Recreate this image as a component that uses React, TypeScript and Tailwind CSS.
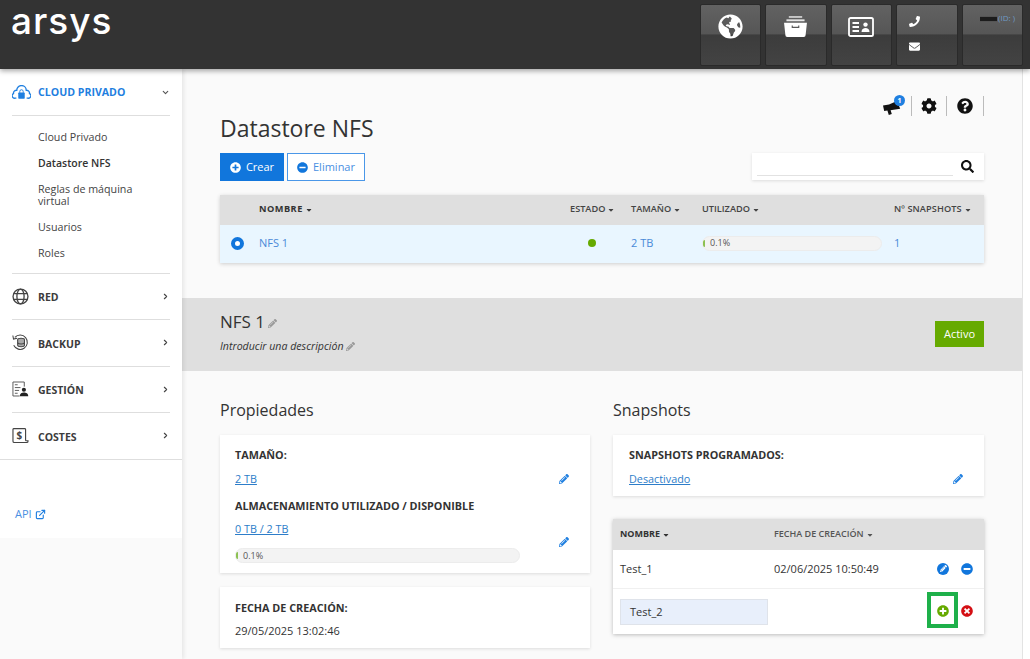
import React from "react";
import {
  FaGlobeAmericas, FaPhone, FaEnvelope, FaCog, FaQuestionCircle, FaSearch,
  FaPlusCircle, FaMinusCircle, FaTimesCircle, FaPencilAlt, FaCaretDown,
} from "react-icons/fa";
import { FiChevronDown, FiChevronRight, FiExternalLink } from "react-icons/fi";

function Caret({ className = "" }: { className?: string }) {
  return <FaCaretDown className={`inline-block w-[8px] h-[8px] ml-[2px] ${className}`} />;
}

function CloudIcon() {
  return (
    <svg viewBox="0 0 20 15" className="w-[19px] h-[15px] text-[#1f7fe0]" fill="none" stroke="currentColor" strokeWidth="1.4">
      <path d="M4.6 13.5 H3.2 A2.6 2.6 0 0 1 1.6 8.6 A3 3 0 0 1 5 5.2 A5 5 0 0 1 15 5.2 A3 3 0 0 1 18.4 8.6 A2.6 2.6 0 0 1 16.8 13.5 H15.4" />
      <rect x="6.6" y="7.6" width="6.8" height="6.4" rx="0.6" fill="currentColor" stroke="none" />
      <path d="M8.2 7.8 V6.4 A1.8 1.8 0 0 1 11.8 6.4 V7.8" strokeWidth="1" />
    </svg>
  );
}
function GlobeIcon() {
  return (
    <svg viewBox="0 0 18 18" className="w-[17px] h-[17px] text-[#444]" fill="none" stroke="currentColor" strokeWidth="1.4">
      <circle cx="9" cy="9" r="7.9" />
      <ellipse cx="9" cy="9" rx="3.8" ry="7.9" />
      <path d="M2 6 H16 M2 12 H16" />
    </svg>
  );
}
function BackupIcon() {
  return (
    <svg viewBox="0 0 18 18" className="w-[17px] h-[17px] text-[#444]" fill="none" stroke="currentColor" strokeWidth="1.1">
      <path d="M3 3.6 A7.6 7.6 0 1 1 1.8 12" />
      <path d="M0.9 1.6 L1.6 5.4 L5.4 4.6" />
      <ellipse cx="9.6" cy="6" rx="3.6" ry="1.5" fill="#aaa" />
      <path d="M6 6 V12 A3.6 1.5 0 0 0 13.2 12 V6" fill="#aaa" />
      <path d="M6 9 A3.6 1.5 0 0 0 13.2 9" />
    </svg>
  );
}
function GestionIcon() {
  return (
    <svg viewBox="0 0 18 16" className="w-[17px] h-[16px] text-[#555]" fill="none" stroke="currentColor" strokeWidth="1">
      <path d="M8 15.4 H1 V0.6 H13 V5.5" />
      <path d="M3 3.5 H6 M3 6.5 H9 M3 9.5 H7.5 M3 12.5 H6" />
      <circle cx="12.6" cy="8.8" r="2.2" fill="#222" stroke="none" />
      <path d="M8.2 15.7 C8.2 12.6 10.4 11.6 12.6 11.6 C14.8 11.6 17.2 12.6 17.2 15.7 Z" fill="#222" stroke="none" />
    </svg>
  );
}
function CostesIcon() {
  return (
    <svg viewBox="0 0 18 17" className="w-[17px] h-[16px] text-[#444]" fill="none" stroke="currentColor" strokeWidth="1.2">
      <path d="M14.4 13.5 V1.5 A1 1 0 0 0 13.4 0.6 H2 A1 1 0 0 0 1 1.5 V14 A1.4 1.4 0 0 0 2.4 15.4 H15.6 A1.4 1.4 0 0 0 17 14 V13.5 H14.4" />
      <text x="7.7" y="11.6" fontSize="10.5" fontWeight="700" textAnchor="middle" fill="currentColor" stroke="none" fontFamily="'Open Sans', sans-serif">$</text>
    </svg>
  );
}
function ArchiveIcon() {
  return (
    <svg viewBox="0 0 26 22" className="w-[25px] h-[21px] text-white" fill="currentColor">
      <rect x="6" y="0" width="14" height="2" opacity="0.65" />
      <rect x="3.5" y="3.5" width="19" height="2" opacity="0.85" />
      <path fillRule="evenodd" d="M1 7 H25 L23.6 20 A2 2 0 0 1 21.6 22 H4.4 A2 2 0 0 1 2.4 20 Z M9 10 V12.6 H17 V10 H15.8 V11.3 H10.2 V10 Z" />
    </svg>
  );
}
function IdIcon() {
  return (
    <svg viewBox="0 0 26 20" className="w-[26px] h-[20px] text-white" fill="none" stroke="currentColor">
      <rect x="1" y="1" width="24" height="18" rx="1.6" strokeWidth="1.8" />
      <path d="M4.5 6 H11 M4.5 10 H11 M4.5 14 H11" strokeWidth="1.8" />
      <circle cx="17.5" cy="7.6" r="2.2" fill="currentColor" stroke="none" />
      <path d="M13.5 15 C13.5 12 15.5 11 17.5 11 C19.5 11 21.5 12 21.5 15 Z" fill="currentColor" stroke="none" />
    </svg>
  );
}
function HornIcon() {
  return (
    <svg viewBox="0 0 18 14" className="w-[18px] h-[14px] text-[#111]" fill="currentColor">
      <path d="M0 4.4 L6 3.6 L14 0 L17.2 7.8 L9 9 L7.6 9.2 L8.8 13 L5.8 14 L4.4 9.6 L1.2 10 Z" />
    </svg>
  );
}

function HeaderButton({ children, className = "" }: { children?: React.ReactNode; className?: string }) {
  return (
    <div className={`w-[61.5px] h-[62px] rounded-[2px] border border-[#2a2a2a] bg-[linear-gradient(#626262_0%,#565656_48%,#3c3c3c_50%,#434343_100%)] ${className}`}>
      {children}
    </div>
  );
}

function NavGroup({ icon, label, h }: { icon: React.ReactNode; label: string; h: string }) {
  return (
    <div className={`${h} flex items-center mx-[12px] border-b border-[#dedede]`}>
      <span className="w-[26px] flex items-center -mt-[1px]">{icon}</span>
      <span className="text-[10.5px] font-bold text-[#3c3c3c] flex-1 mt-[3px]">{label}</span>
      <FiChevronRight className="w-[9px] h-[9px] text-[#444] -mt-[1px]" strokeWidth={3} />
    </div>
  );
}

function Progress({ w }: { w: string }) {
  return (
    <div className={`${w} h-[15px] rounded-full bg-[#f3f3f3] border border-[#ececec] relative flex items-center pl-[7px] text-[9px] text-[#555]`}>
      <span className="absolute left-0 top-[3px] w-[2px] h-[7px] bg-[#8cc152] rounded-l" />
      0.1%
    </div>
  );
}

function Pencil({ className = "" }: { className?: string }) {
  return <FaPencilAlt className={`w-[10px] h-[10px] text-[#1f7fe0] ${className}`} />;
}

export default function App() {
  return (
    <div className="w-[1030px] h-[659px] overflow-hidden bg-[#ffffff] flex flex-col text-[11px] text-[#333] font-['Open_Sans',sans-serif]">
      <header className="h-[69px] shrink-0 bg-[#333333] flex justify-between relative z-20 shadow-[0_2px_5px_rgba(0,0,0,0.35)] pl-[11px] pr-[7px] pt-[4px]">
        <div className="text-white text-[37px] leading-[40px] font-medium font-['Inter',sans-serif] tracking-[1px] -mt-[3px]">arsys</div>
        <div className="flex gap-[4px]">
          <HeaderButton className="flex justify-center pt-[9px]">
            <FaGlobeAmericas className="w-[25px] h-[25px] text-white" />
          </HeaderButton>
          <HeaderButton className="flex justify-center pt-[11px]"><ArchiveIcon /></HeaderButton>
          <HeaderButton className="flex justify-center pt-[12px]"><IdIcon /></HeaderButton>
          <HeaderButton className="flex flex-col gap-[14px] pl-[12px] pt-[11px]">
            <FaPhone className="w-[11px] h-[11px] text-white" />
            <FaEnvelope className="w-[11px] h-[11px] text-white" />
          </HeaderButton>
          <HeaderButton className="flex justify-end pt-[6px] pr-[7px] gap-[1px]">
            <span className="w-[17px] h-[6px] mt-[5px] bg-[#1c1c1c] border-y border-[#555]" />
            <span className="text-[8px] leading-[14px] text-[#6f9ac4]">(ID: )</span>
          </HeaderButton>
        </div>
      </header>

      <div className="flex flex-1 min-h-0">
        <aside className="w-[182px] shrink-0 bg-[#fafafa] shadow-[2px_0_4px_rgba(0,0,0,0.08)] relative z-10">
          <div className="bg-white h-[469px]">
            <div className="h-[47px] flex items-center mx-[12px] border-b border-[#dedede]">
              <span className="w-[26px] flex items-center"><CloudIcon /></span>
              <span className="text-[10.6px] font-bold text-[#1f7fe0] flex-1 mt-[1px]">CLOUD PRIVADO</span>
              <FiChevronDown className="w-[9px] h-[9px] text-[#555]" strokeWidth={3} />
            </div>
            <div className="mx-[12px] border-b border-[#dedede] h-[158px] pl-[26px] pt-[8px] text-[10.7px] text-[#444]">
              <div className="h-[26px] leading-[26px]">Cloud Privado</div>
              <div className="h-[26px] leading-[26px] font-semibold text-[#333] text-[10.5px]">Datastore NFS</div>
              <div className="h-[38px] leading-[12px] pt-[7px]">Reglas de máquina<br />virtual</div>
              <div className="h-[26px] leading-[26px]">Usuarios</div>
              <div className="h-[26px] leading-[26px]">Roles</div>
            </div>
            <NavGroup h="h-[46px]" icon={<GlobeIcon />} label="RED" />
            <NavGroup h="h-[47px]" icon={<BackupIcon />} label="BACKUP" />
            <NavGroup h="h-[46px]" icon={<GestionIcon />} label="GESTIÓN" />
            <div className="h-[47px] flex items-center px-[12px] border-b border-[#dedede]">
              <span className="w-[26px] flex items-center -mt-[1px]"><CostesIcon /></span>
              <span className="text-[10.5px] font-bold text-[#3c3c3c] flex-1 mt-[3px]">COSTES</span>
              <FiChevronRight className="w-[9px] h-[9px] text-[#444] -mt-[1px]" strokeWidth={3} />
            </div>
            <div className="pl-[15px] pt-[46px] flex items-center gap-[3px] text-[#4a90e2] text-[11px]">
              API <FiExternalLink className="w-[11px] h-[11px] text-[#1f7fe0]" strokeWidth={2.5} />
            </div>
          </div>
        </aside>

        <main className="w-[841px] shrink-0 bg-[#fafafa] border-r border-[#e3e3e3] overflow-hidden">
          <div className="px-[38px]">
            <div className="h-[44px] flex justify-end items-start pt-[27px]">
              <div className="relative w-[30px] h-[20px] border-r border-[#bbb] flex items-center">
                <span className="mt-[3px] ml-[1px]"><HornIcon /></span>
                <span className="absolute left-[12px] -top-[1px] w-[11px] h-[11px] rounded-full bg-[#1f7fe0] text-white text-[7px] leading-[11px] text-center font-bold">1</span>
              </div>
              <div className="w-[35px] h-[20px] border-r border-[#bbb] flex items-center justify-center">
                <FaCog className="w-[16px] h-[16px] text-[#111]" />
              </div>
              <div className="w-[37px] h-[20px] border-r border-[#bbb] flex items-center justify-center">
                <FaQuestionCircle className="w-[16px] h-[16px] text-[#111]" />
              </div>
            </div>
            <h1 className="text-[23px] leading-[30px] text-[#333] h-[40px]">Datastore NFS</h1>
            <div className="flex justify-between h-[28px]">
              <div className="flex gap-[3px]">
                <button className="w-[64px] h-[28px] bg-[#1176dc] text-white flex items-center justify-center gap-[5px] text-[11px]">
                  <FaPlusCircle className="w-[11px] h-[11px]" /> Crear
                </button>
                <button className="w-[78px] h-[28px] bg-white border border-[#4a97e8] text-[#4a90e2] flex items-center justify-center gap-[5px] text-[11px]">
                  <FaMinusCircle className="w-[11px] h-[11px] text-[#1176dc]" /> Eliminar
                </button>
              </div>
              <div className="w-[232px] h-[27px] bg-white shadow-[0_1px_3px_rgba(0,0,0,0.12)] flex items-start pl-[5px] pr-[10px] relative">
                <div className="w-[196px] h-[23px] border-b border-[#e2e2e2]" />
                <FaSearch className="absolute right-[10px] top-[7px] w-[13px] h-[13px] text-[#111]" />
              </div>
            </div>

            <div className="mt-[14px] shadow-[0_1px_4px_rgba(0,0,0,0.18)]">
              <div className="h-[30px] pb-[2px] bg-[#dfdfdf] grid grid-cols-[39px_311px_61px_71px_192px_1fr] items-center text-[9.2px] font-semibold text-[#444]">
                <span />
                <span className="font-bold text-[#333] tracking-[0.5px]">NOMBRE<Caret /></span>
                <span>ESTADO<Caret /></span>
                <span>TAMAÑO<Caret /></span>
                <span>UTILIZADO<Caret /></span>
                <span className="tracking-[0.1px]">Nº SNAPSHOTS<Caret /></span>
              </div>
              <div className="h-[38px] pb-[2px] bg-[#e9f6ff] grid grid-cols-[39px_311px_61px_71px_192px_1fr] items-center text-[11px] text-[#4a8ad8]">
                <span className="pl-[11px]">
                  <span className="block w-[13px] h-[13px] rounded-full border-[4px] border-[#1176dc] bg-white" />
                </span>
                <span>NFS 1</span>
                <span className="pl-[18px]"><span className="block w-[8px] h-[8px] rounded-full bg-[#66aa00]" /></span>
                <span>2 TB</span>
                <span><Progress w="w-[180px]" /></span>
                <span>1</span>
              </div>
            </div>
          </div>

          <section className="mt-[35px] h-[73px] bg-[#dfdfdf] px-[38px] flex justify-between">
            <div>
              <div className="text-[17px] leading-[24px] pt-[12px] h-[36px] text-[#333] flex items-center gap-[3px]">
                NFS 1 <FaPencilAlt className="w-[9px] h-[9px] text-[#999] mt-[3px]" />
              </div>
              <div className="text-[10.6px] italic text-[#333] leading-[14px] mt-[5px] flex items-center gap-[3px]">
                Introducir una descripción <FaPencilAlt className="w-[9px] h-[9px] text-[#999]" />
              </div>
            </div>
            <div className="w-[49px] h-[26px] mt-[23px] bg-[#66aa00] text-white text-[11px] flex items-center justify-center">Activo</div>
          </section>

          <div className="px-[38px] grid grid-cols-[370px_371px] gap-x-[23px] mt-[27px]">
            <div>
              <h2 className="text-[16px] leading-[24px] text-[#333] h-[37px]">Propiedades</h2>
              <div className="h-[138px] bg-white shadow-[0_1px_3px_rgba(0,0,0,0.12)] pl-[15px] pt-[12px] relative text-[10.8px]">
                <div className="font-bold text-[#333] leading-[15px]">TAMAÑO:</div>
                <div className="mt-[9px] leading-[15px] text-[#2d7dc9] underline">2 TB</div>
                <Pencil className="absolute left-[339px] top-[39px]" />
                <div className="mt-[12px] font-bold text-[#333] leading-[15px]">ALMACENAMIENTO UTILIZADO / DISPONIBLE</div>
                <div className="mt-[8px] leading-[15px] text-[#2d7dc9] underline">0 TB / 2 TB</div>
                <div className="mt-[12px]"><Progress w="w-[285px]" /></div>
                <Pencil className="absolute left-[339px] top-[102px]" />
              </div>
              <div className="mt-[14px] h-[61px] bg-white shadow-[0_1px_3px_rgba(0,0,0,0.12)] pl-[15px] pt-[13px]">
                <div className="font-bold text-[#333] leading-[15px] text-[10.8px]">FECHA DE CREACIÓN:</div>
                <div className="mt-[8px] leading-[15px]">29/05/2025 13:02:46</div>
              </div>
            </div>

            <div>
              <h2 className="text-[16px] leading-[24px] text-[#333] h-[37px]">Snapshots</h2>
              <div className="h-[61px] bg-white shadow-[0_1px_3px_rgba(0,0,0,0.12)] pl-[16px] pt-[12px] relative text-[10.8px]">
                <div className="font-bold text-[#333] leading-[15px]">SNAPSHOTS PROGRAMADOS:</div>
                <div className="mt-[9px] leading-[15px] text-[#2d7dc9] underline">Desactivado</div>
                <Pencil className="absolute left-[340px] top-[39px]" />
              </div>
              <div className="mt-[23px] bg-white shadow-[0_1px_4px_rgba(0,0,0,0.25)] relative">
                <div className="h-[31px] pb-[1px] bg-[#dfdfdf] grid grid-cols-[154px_1fr] items-center pl-[7px] text-[9px] font-semibold text-[#555]">
                  <span className="font-bold text-[#333]">NOMBRE<Caret /></span>
                  <span>FECHA DE CREACIÓN<Caret /></span>
                </div>
                <div className="h-[39px] grid grid-cols-[154px_1fr_auto] items-center pl-[7px] border-b border-[#f0f0f0]">
                  <span>Test_1</span>
                  <span>02/06/2025 10:50:49</span>
                  <span className="flex gap-[12px] pr-[11px] -mt-[1px]">
                    <span className="w-[12px] h-[12px] rounded-full bg-[#1176dc] flex items-center justify-center">
                      <FaPencilAlt className="w-[7px] h-[7px] text-white" />
                    </span>
                    <FaMinusCircle className="w-[12px] h-[12px] text-[#1176dc]" />
                  </span>
                </div>
                <div className="h-[45px] flex items-center pl-[7px]">
                  <div className="w-[148px] h-[26px] bg-[#e8effb] border border-[#dfe3ea] pl-[9px] leading-[24px]">Test_2</div>
                  <span className="ml-auto flex gap-[12px] pr-[11px] -mt-[1px]">
                    <FaPlusCircle className="w-[12px] h-[12px] text-[#66aa00]" />
                    <FaTimesCircle className="w-[12px] h-[12px] text-[#d40f14]" />
                  </span>
                </div>
                <div className="absolute left-[314px] top-[73px] w-[31px] h-[36px] border-[4px] border-[#1eb04a]" />
              </div>
            </div>
          </div>
        </main>
      </div>
    </div>
  );
}
